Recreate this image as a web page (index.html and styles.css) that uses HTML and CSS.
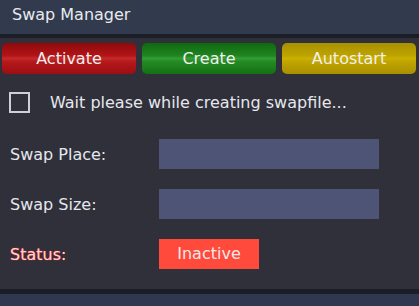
FILE: index.html
```html
<!DOCTYPE html>
<html lang="en">
<head>
  <meta charset="UTF-8">
  <meta name="viewport" content="width=device-width, initial-scale=1.0">
  <title>Swap Manager</title>
  <link rel="stylesheet" href="styles.css">
</head>
<body>
  <div class="window">
    <div class="titlebar">Swap Manager</div>

    <div class="content">
      <div class="actions">
        <button class="btn red">Activate</button>
        <button class="btn green">Create</button>
        <button class="btn yellow">Autostart</button>
      </div>

      <label class="check-row">
        <span class="checkbox"></span>
        <span>Wait please while creating swapfile...</span>
      </label>

      <div class="form">
        <div class="field">
          <span class="label">Swap Place:</span>
          <div class="input"></div>
        </div>
        <div class="field">
          <span class="label">Swap Size:</span>
          <div class="input"></div>
        </div>
        <div class="field">
          <span class="label status-label">Status:</span>
          <div class="status">Inactive</div>
        </div>
      </div>
    </div>

    <div class="footer"></div>
  </div>
</body>
</html>
```

FILE: styles.css
```css
body {
  margin: 0;
  font-family: 'DejaVu Sans', 'Liberation Sans', sans-serif;
  background-color: #2f3039;
  color: #e6e7ee;
}

.window {
  display: flex;
  flex-direction: column;
  height: 306px;
}

.titlebar {
  height: 38px;
  box-sizing: border-box;
  padding: 5px 0 0 12px;
  background-color: #323a4d;
  border-bottom: 4px solid #1b1e26;
  font-size: 16px;
  color: #e8eaf0;
}

.content {
  flex: 1;
  padding-top: 5px;
}

.actions {
  display: flex;
  gap: 6px;
  padding: 0 3px 0 2px;
}

.btn {
  flex: 1;
  height: 31px;
  border: none;
  border-radius: 5px;
  font-family: inherit;
  font-size: 16px;
  color: #f0f0f0;
  padding: 0;
  cursor: pointer;
}

.btn.red {
  background: linear-gradient(#8f0a0c, #b11417 40%, #c52a2a 50%, #b5191b 60%, #9c0e10);
}

.btn.green {
  background: linear-gradient(#106910, #1f8320 40%, #359c35 50%, #248a24 60%, #137013);
}

.btn.yellow {
  background: linear-gradient(#a89000, #bda300 40%, #ccb000 50%, #c1a500 60%, #a88f00);
}

.check-row {
  display: flex;
  align-items: center;
  gap: 20px;
  margin: 18px 0 0 9px;
  font-size: 16px;
}

.checkbox {
  width: 17px;
  height: 17px;
  border: 2px solid #cfcfd6;
}

.form {
  display: flex;
  flex-direction: column;
  gap: 20px;
  margin-top: 26px;
}

.field {
  display: flex;
  align-items: center;
  padding-left: 10px;
}

.label {
  width: 149px;
  font-size: 16px;
}

.input {
  width: 220px;
  height: 30px;
  background-color: #4e5475;
}

.status-label {
  color: #ffd2d2;
  text-shadow: 0 0 1px #ff3030, 0 0 1px #ff3030;
}

.status {
  width: 100px;
  height: 30px;
  line-height: 30px;
  text-align: center;
  background-color: #ff4a3c;
  color: #f6e8e8;
  font-size: 16px;
}

.footer {
  height: 12px;
  background-color: #2f3850;
  border-top: 5px solid #1b1e26;
}
```
